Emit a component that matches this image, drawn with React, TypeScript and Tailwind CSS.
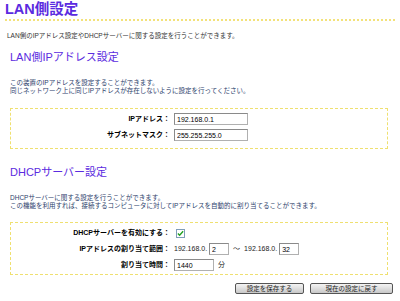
import React from 'react';

const font = "font-['Liberation_Sans','Noto_Sans_CJK_JP',sans-serif]";

function Field({ value, width }: { value: string; width: string }) {
  return (
    <input
      readOnly
      value={value}
      className={`${width} h-[12px] bg-white border border-[#b0b0b0] border-t-[#8a8a8a] border-l-[#8a8a8a] px-[2px] text-[7px] leading-[10px] text-black outline-none`}
    />
  );
}

function Row({ label, children }: { label: string; children: React.ReactNode }) {
  return (
    <div className="flex items-center h-[12px]">
      <div className="w-[159px] text-right font-bold text-[7px] leading-[10px] text-black">{label}</div>
      <div className="ml-[4px] flex items-center text-[7px] text-[#222]">{children}</div>
    </div>
  );
}

export default function App() {
  return (
    <div className={`w-[400px] h-[301px] bg-white overflow-hidden ${font}`}>
      <div className="px-[5px] pt-[1px]">
        <h1 className="text-[14.5px] leading-[17px] font-bold text-[#5b2be0]">LAN側設定</h1>
        <div className="mt-[1px] w-[390px] border-b-2 border-dotted border-[#f3e27a]" />
      </div>

      <p className="mt-[11px] ml-[7px] text-[6.5px] leading-[8px] text-[#333]">
        LAN側のIPアドレス設定やDHCPサーバーに関する設定を行うことができます。
      </p>

      <h2 className="mt-[10px] ml-[10px] text-[11px] leading-[14px] text-[#5b2be0]">LAN側IPアドレス設定</h2>

      <div className="mt-[15px] ml-[10px] text-[6.5px] leading-[8px] text-[#2c3e6b]">
        <p>この装置のIPアドレスを設定することができます。</p>
        <p>同じネットワーク上に同じIPアドレスが存在しないように設定を行ってください。</p>
      </div>

      <div className="mt-[13px] ml-[10px] w-[378px] border border-dashed border-[#efe070] pt-[4px] pb-[7px] flex flex-col gap-[4px]">
        <Row label="IPアドレス：">
          <Field value="192.168.0.1" width="w-[74px]" />
        </Row>
        <Row label="サブネットマスク：">
          <Field value="255.255.255.0" width="w-[74px]" />
        </Row>
      </div>

      <h2 className="mt-[16px] ml-[10px] text-[11px] leading-[14px] text-[#5b2be0]">DHCPサーバー設定</h2>

      <div className="mt-[15px] ml-[10px] text-[6.5px] leading-[8px] text-[#2c3e6b]">
        <p>DHCPサーバーに関する設定を行うことができます。</p>
        <p>この機能を利用すれば、接続するコンピュータに対してIPアドレスを自動的に割り当てることができます。</p>
      </div>

      <div className="mt-[12px] ml-[10px] w-[378px] border border-dashed border-[#efe070] pt-[4px] pb-[3px] flex flex-col gap-[4px]">
        <Row label="DHCPサーバーを有効にする：">
          <div className="ml-[2px] w-[9px] h-[9px] border border-[#7f9db9] bg-white flex items-center justify-center">
            <svg viewBox="0 0 8 8" className="w-[7px] h-[7px]">
              <path d="M1 4 L3 6 L7 1.5" stroke="#21a121" strokeWidth="1.6" fill="none" />
            </svg>
          </div>
        </Row>
        <Row label="IPアドレスの割り当て範囲：">
          <span className="mr-[2px]">192.168.0.</span>
          <Field value="2" width="w-[20px]" />
          <span className="mx-[4px]">～</span>
          <span className="mr-[2px]">192.168.0.</span>
          <Field value="32" width="w-[20px]" />
        </Row>
        <Row label="割り当て時間：">
          <Field value="1440" width="w-[40px]" />
          <span className="ml-[4px]">分</span>
        </Row>
      </div>

      <div className="mt-[8px] flex justify-end gap-[6px] pr-[7px]">
        <button className="w-[69px] h-[11px] rounded-[2px] border border-[#555] bg-gradient-to-b from-[#f4f4f4] to-[#c8c8c8] text-[6.5px] leading-[9px] text-[#222]">
          設定を保存する
        </button>
        <button className="w-[83px] h-[11px] rounded-[2px] border border-[#555] bg-gradient-to-b from-[#f4f4f4] to-[#c8c8c8] text-[6.5px] leading-[9px] text-[#222]">
          現在の設定に戻す
        </button>
      </div>
    </div>
  );
}
